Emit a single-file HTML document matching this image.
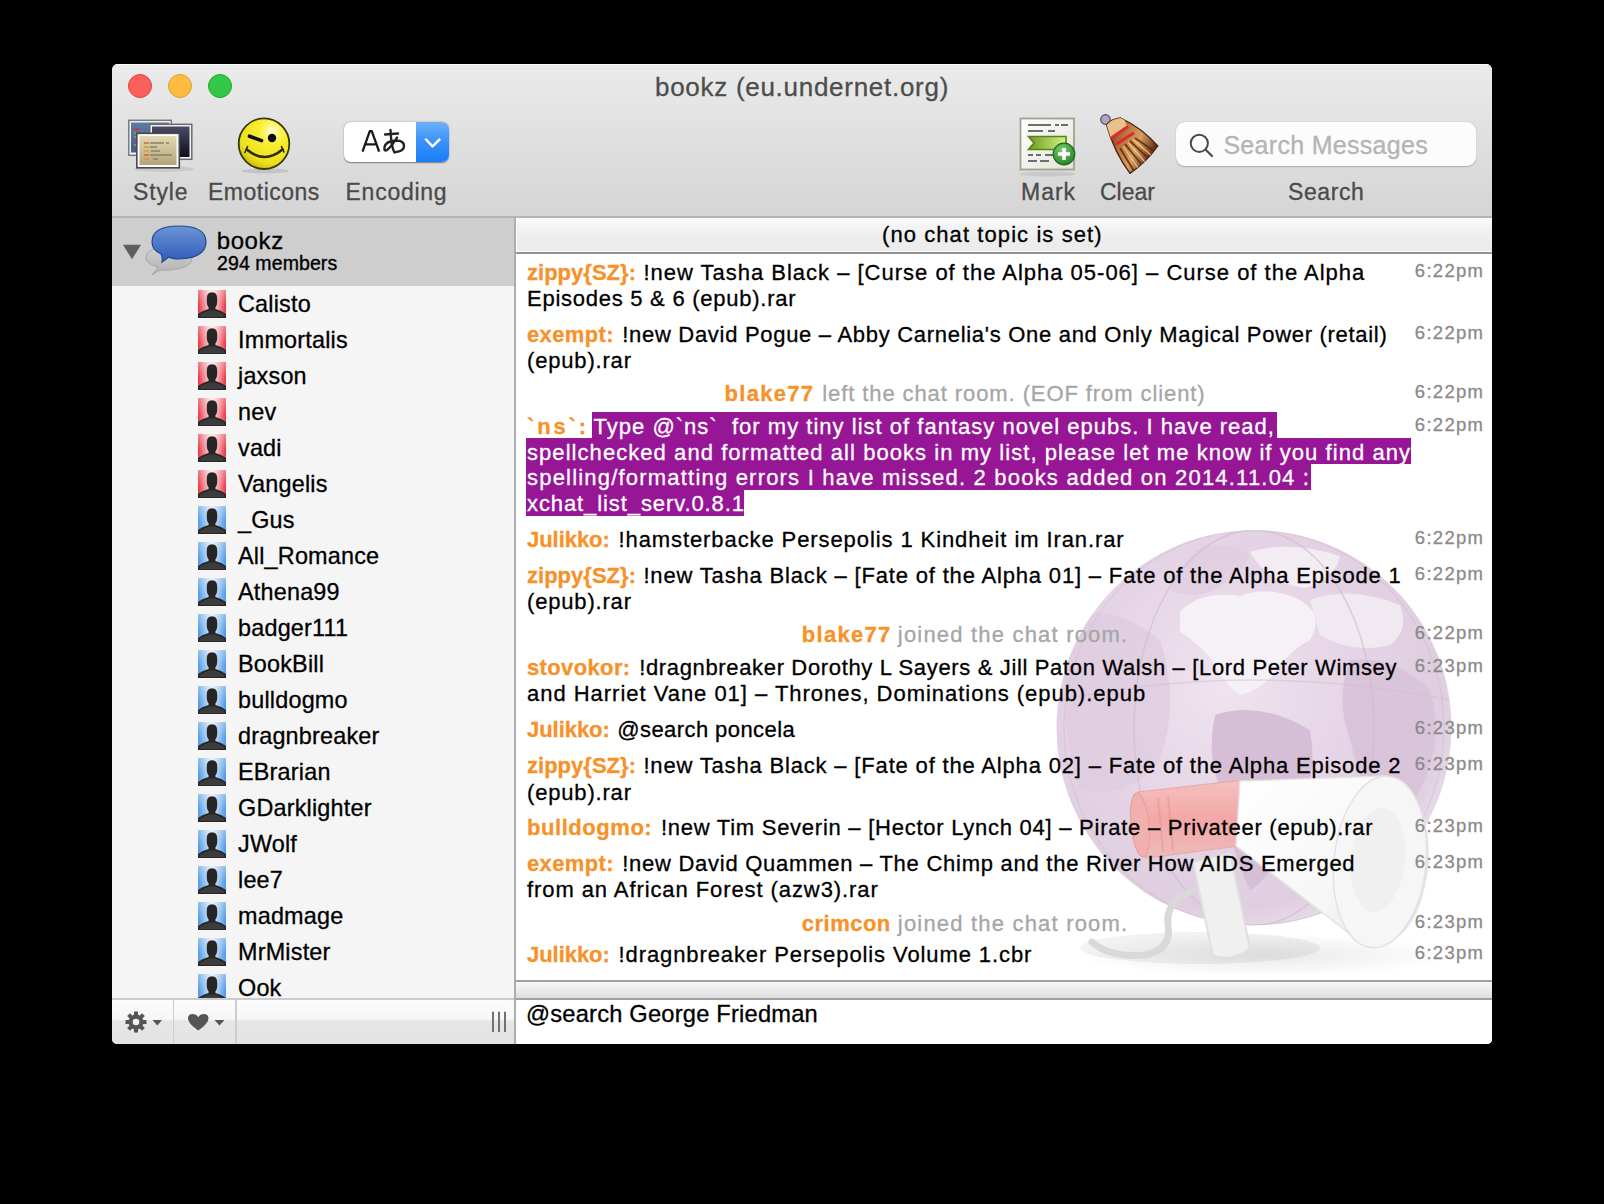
<!DOCTYPE html>
<html><head><meta charset="utf-8">
<style>
html,body{margin:0;padding:0;background:#000;width:1604px;height:1204px;overflow:hidden;}
*{box-sizing:border-box;}
body{font-family:"Liberation Sans",sans-serif;position:relative;}
.a{position:absolute;white-space:pre;line-height:normal;-webkit-text-stroke:0.3px currentColor;}
#win{position:absolute;left:112px;top:64px;width:1380px;height:980px;border-radius:6px 6px 5px 5px;overflow:hidden;background:#f5f5f5;}
#tb{position:absolute;left:0;top:0;width:1380px;height:154px;background:linear-gradient(#ebebeb,#e4e4e4 30%,#d5d5d5);border-bottom:2px solid #b3b3b3;box-shadow:inset 0 1px 0 #fafafa;}
.tl{position:absolute;top:10px;width:24px;height:24px;border-radius:50%;}
.title{left:0;width:1380px;text-align:center;top:8px;font-size:26px;letter-spacing:0.72px;color:#4d4d4d;}
.lbl{font-size:23px;color:#4a4a4a;top:115px;}
.nm{font-size:23.4px;color:#000;left:126px;letter-spacing:0.2px;}
.m{font-size:22px;color:#000;}
.n{font-size:22px;font-weight:bold;color:#f6922a;-webkit-text-stroke:0.3px currentColor;}
.ev{color:#a6a6a6;}
.hl{color:#fff;}
.ts{font-size:18.5px;letter-spacing:1.3px;color:#8a8a8a;right:7.7px;}
svg{position:absolute;overflow:visible;}
</style></head><body>
<svg width="0" height="0" style="position:absolute">
<defs>
 <linearGradient id="ured" x1="0" x2="1" y1="0" y2="0">
  <stop offset="0" stop-color="#e8323f"/><stop offset="0.3" stop-color="#f6a9b0"/><stop offset="0.5" stop-color="#fbe0e2"/><stop offset="0.7" stop-color="#f6a9b0"/><stop offset="1" stop-color="#e8323f"/>
 </linearGradient>
 <linearGradient id="ublue" x1="0" x2="1" y1="0" y2="0">
  <stop offset="0" stop-color="#4b97e6"/><stop offset="0.3" stop-color="#a9cdf3"/><stop offset="0.5" stop-color="#e2eefb"/><stop offset="0.7" stop-color="#a9cdf3"/><stop offset="1" stop-color="#4b97e6"/>
 </linearGradient>
 <linearGradient id="ushade" x1="0" x2="0" y1="0" y2="1">
  <stop offset="0" stop-color="#fff" stop-opacity="0.35"/><stop offset="0.6" stop-color="#fff" stop-opacity="0"/>
 </linearGradient>
 <g id="person">
  <path d="M8.8 8.2 Q8.8 2.2 14 2.2 Q19.2 2.2 19.2 8.2 L19.2 12 Q19.2 15.6 17.4 17.6 L17.4 19 Q23.5 20.5 28 24 L28 28 L0 28 L0 24 Q4.5 20.5 10.6 19 L10.6 17.6 Q8.8 15.6 8.8 12 Z" fill="#262626"/>
  <path d="M1.5 25 Q6 22 11.5 20.5 L16.5 20.5 Q22 22 26.5 25 L26.5 27 L1.5 27Z" fill="#3c3c3c"/>
 </g>
</defs>
</svg>
<div id="win">
  <div id="tb">
    <div class="tl" style="left:16px;background:#fc605c;border:1px solid #e0443e"></div>
    <div class="tl" style="left:56px;background:#fdbc40;border:1px solid #dea034"></div>
    <div class="tl" style="left:96px;background:#34c84a;border:1px solid #1aab29"></div>
    <div class="a title">bookz (eu.undernet.org)</div>
    <!-- style icon -->
<svg style="left:14px;top:54px" width="70" height="56" viewBox="0 0 70 56">
 <defs>
  <linearGradient id="stb" x1="0" y1="0" x2="0" y2="1"><stop offset="0" stop-color="#5d7ba3"/><stop offset="1" stop-color="#3f5f8e"/></linearGradient>
  <linearGradient id="stn" x1="0" y1="0" x2="0" y2="1"><stop offset="0" stop-color="#4a4a68"/><stop offset="1" stop-color="#0e0e1c"/></linearGradient>
  <linearGradient id="stf" x1="0" y1="0" x2="0" y2="1"><stop offset="0" stop-color="#e2d9b2"/><stop offset="1" stop-color="#b3a57a"/></linearGradient>
 </defs>
 <ellipse cx="38" cy="51" rx="30" ry="3" fill="#000" opacity="0.08"/>
 <rect x="2.8" y="2.3" width="42.5" height="35" fill="#f4f4f4" stroke="#7a7a7a" stroke-width="1.5"/>
 <rect x="5" y="4.5" width="38" height="30" fill="url(#stb)"/>
 <rect x="23.8" y="6.3" width="42" height="35" fill="#f4f4f4" stroke="#6a6a6a" stroke-width="1.5"/>
 <rect x="26" y="8.5" width="37.5" height="30.5" fill="url(#stn)"/>
 <rect x="10.8" y="15.3" width="42.5" height="34.5" fill="#fafafa" stroke="#4a4a4a" stroke-width="1.6"/>
 <rect x="13.5" y="18" width="37" height="29" fill="url(#stf)"/>
 <g stroke-width="1.7" transform="translate(1 2)">
  <line x1="17" y1="23" x2="22" y2="23" stroke="#d8604a"/><line x1="23" y1="23" x2="37" y2="23" stroke="#8a8068"/><line x1="39" y1="23" x2="42" y2="23" stroke="#8a8068"/>
  <line x1="17" y1="27" x2="22" y2="27" stroke="#e09040"/><line x1="23" y1="27" x2="30" y2="27" stroke="#8a8068"/>
  <line x1="17" y1="31" x2="22" y2="31" stroke="#e0a030"/><line x1="24" y1="31" x2="33" y2="31" stroke="#8a8068"/>
  <line x1="17" y1="35" x2="22" y2="35" stroke="#d8604a"/><line x1="23" y1="35" x2="45" y2="35" stroke="#8a8068"/>
  <line x1="17" y1="39" x2="22" y2="39" stroke="#e09040"/><line x1="26" y1="39" x2="31" y2="39" stroke="#8a8068"/>
 </g>
 <line x1="8" y1="11" x2="14" y2="11" stroke="#c03a3a" stroke-width="1.5"/><g stroke="#c8903a" stroke-width="1.3"><line x1="8" y1="15" x2="10" y2="15"/><line x1="8" y1="19" x2="10" y2="19"/><line x1="8" y1="27" x2="10" y2="27"/></g><line x1="8" y1="23" x2="10" y2="23" stroke="#c03a3a" stroke-width="1.3"/>
</svg>
<!-- smiley -->
<svg style="left:122px;top:50px" width="62" height="62" viewBox="0 0 62 62">
 <defs>
  <radialGradient id="smy" cx="0.66" cy="0.25" r="0.8"><stop offset="0" stop-color="#fffde0"/><stop offset="0.18" stop-color="#fbf66a"/><stop offset="0.35" stop-color="#f7ef30"/><stop offset="0.8" stop-color="#ece01c"/><stop offset="1" stop-color="#c9b80e"/></radialGradient>
 </defs>
 <ellipse cx="31" cy="57" rx="24" ry="2.5" fill="#000" opacity="0.1"/>
 <circle cx="30" cy="29.7" r="25.3" fill="url(#smy)" stroke="#3d3608" stroke-width="1.8"/>
 <line x1="15.5" y1="22.2" x2="27.5" y2="26.6" stroke="#111" stroke-width="3.6" stroke-linecap="round"/>
 <circle cx="38" cy="24" r="4.2" fill="#0a0a0a"/>
 <path d="M12.8 35.5 Q30.5 50.5 48.5 35.5" fill="none" stroke="#2d2a08" stroke-width="2.6" stroke-linecap="round"/>
 <path d="M11 38.5 L13.5 32.5 M50 38 L47.5 32.5" stroke="#2d2a08" stroke-width="1.6" stroke-linecap="round"/>
</svg>
<!-- encoding popup -->
<div style="position:absolute;left:232px;top:58px;width:105px;height:40px;border-radius:7px;background:#fff;box-shadow:0 0.5px 1.5px rgba(0,0,0,0.45);overflow:hidden">
 <div style="position:absolute;left:72px;top:0;width:33px;height:40px;background:linear-gradient(#6db1f9,#3c94fa 45%,#1a7bf8)"></div>
</div>
<svg style="left:244px;top:62px" width="95" height="34" viewBox="0 0 95 34">
 <path d="M70 13.5 L76.5 20.3 L83.5 13.5" fill="none" stroke="#fff" stroke-width="2.5" stroke-linecap="round" stroke-linejoin="round"/>
 <path d="M6.5 25.6 L13.8 5.2 L15.8 5.2 L23.1 25.6 M9.2 18.4 L20.4 18.4" fill="none" stroke="#1a1a1a" stroke-width="2.3" stroke-linejoin="round"/>
 <g fill="none" stroke="#222" stroke-width="2.4" stroke-linecap="round">
  <path d="M29 8.5 L42 7.5"/>
  <path d="M34.5 4 Q35 14 36 19 Q37 24 38.5 26.5"/>
  <path d="M41 11.5 Q36 20 31 24 Q28 26 28.5 21 Q30 15 40 14.5 Q48 14.5 48 20 Q48 25 40 26"/>
 </g>
</svg>
<!-- mark icon -->
<svg style="left:906px;top:52px" width="62" height="62" viewBox="0 0 62 62">
 <defs>
  <linearGradient id="mkd" x1="0" y1="0" x2="1" y2="1"><stop offset="0" stop-color="#ffffff"/><stop offset="1" stop-color="#e2e3d8"/></linearGradient>
  <linearGradient id="mkr" x1="0" y1="0" x2="1" y2="0"><stop offset="0" stop-color="#6d9a1e"/><stop offset="1" stop-color="#d4f48a"/></linearGradient>
  <radialGradient id="mkc" cx="0.4" cy="0.3" r="0.8"><stop offset="0" stop-color="#7ccf6a"/><stop offset="1" stop-color="#1f7a22"/></radialGradient>
 </defs>
 <ellipse cx="30" cy="58" rx="28" ry="2.5" fill="#000" opacity="0.08"/>
 <rect x="2.5" y="2.5" width="53.5" height="51" fill="url(#mkd)" stroke="#9fa28f" stroke-width="1.8"/>
 <g stroke="#6e6e6e" stroke-width="1.8">
  <line x1="10" y1="9" x2="33" y2="9"/><line x1="37" y1="9" x2="41" y2="9"/><line x1="43" y1="9" x2="50" y2="9"/>
  <line x1="10" y1="15" x2="25" y2="15"/><line x1="30" y1="15" x2="37" y2="15"/>
  <line x1="10" y1="39" x2="15" y2="39"/><line x1="18" y1="39" x2="23" y2="39"/><line x1="27" y1="39" x2="35" y2="39"/>
  <line x1="10" y1="45" x2="19" y2="45"/><line x1="22" y1="45" x2="31" y2="45"/>
 </g>
 <path d="M10.5 20.5 L48 20.5 L48 33.5 L10.5 33.5 L16 27 Z" fill="url(#mkr)" stroke="#5a8414" stroke-width="1.6"/>
 <circle cx="46" cy="38" r="10.8" fill="url(#mkc)" stroke="#1d6a1e" stroke-width="1.2"/>
 <path d="M46 32 L46 44 M40 38 L52 38" stroke="#fff" stroke-width="3.6"/>
</svg>
<!-- broom -->
<svg style="left:986px;top:50px" width="66" height="68" viewBox="0 0 66 68">
 <defs>
  <linearGradient id="brg" x1="8.6" y1="11" x2="59.8" y2="32" gradientUnits="userSpaceOnUse"><stop offset="0" stop-color="#5a2412"/><stop offset="0.3" stop-color="#b06a30"/><stop offset="0.65" stop-color="#d9a062"/><stop offset="1" stop-color="#5a2412"/></linearGradient>
  <clipPath id="brc"><path d="M8.6 11 Q14.1 4.5 22.6 4 Q44.2 14 59.8 32 Q48.4 48.2 32 59.4 Q15.8 37.4 8.6 11 Z"/></clipPath>
 </defs>
  <circle cx="7.5" cy="5.5" r="4.8" fill="#b2a4bc" stroke="#5a4868" stroke-width="1.2"/>
 <path d="M8.6 11 Q14.1 4.5 22.6 4 Q44.2 14 59.8 32 Q48.4 48.2 32 59.4 Q15.8 37.4 8.6 11 Z" fill="url(#brg)" stroke="#4a2010" stroke-width="1.3" stroke-linejoin="round"/>
 <g clip-path="url(#brc)">
  <path d="M5 10 L24 0 L29.6 12.9 L12 25 Z" fill="#e8c088"/>
  <line x1="11" y1="25.5" x2="30" y2="12.5" stroke="#de2a36" stroke-width="3"/>
  <line x1="17.5" y1="30.8" x2="36" y2="18.8" stroke="#de2a36" stroke-width="3"/>
  <g stroke="#5c2812" stroke-width="1.8" opacity="0.85">
   <line x1="22" y1="34" x2="36" y2="57"/><line x1="27" y1="30" x2="44" y2="51"/><line x1="32" y1="27" x2="50" y2="44"/><line x1="37" y1="24" x2="56" y2="37"/>
  </g>
  <g stroke="#f6d49a" stroke-width="1.2" opacity="0.8">
   <line x1="25" y1="32" x2="40" y2="54"/><line x1="30" y1="28.5" x2="47" y2="48"/><line x1="35" y1="25.5" x2="53" y2="41"/>
  </g>
 </g>
</svg>
<!-- search field -->
<div style="position:absolute;left:1064px;top:58px;width:300px;height:44px;border-radius:9px;background:#fcfcfc;box-shadow:0 0.5px 1.5px rgba(0,0,0,0.22)"></div>
<svg style="left:1074px;top:66px" width="40" height="30" viewBox="0 0 40 30">
 <circle cx="13.3" cy="13.3" r="8.6" fill="none" stroke="#4a4a4a" stroke-width="2"/>
 <line x1="19.5" y1="19.5" x2="26" y2="26" stroke="#4a4a4a" stroke-width="2.2" stroke-linecap="round"/>
</svg>
<div class="a" style="left:1111.4px;top:66.6px;font-size:25px;color:#b4b4b4;letter-spacing:0.3px">Search Messages</div>

    <div class="a lbl" style="left:21px;letter-spacing:0.85px">Style</div>
    <div class="a lbl" style="left:96px;letter-spacing:0.5px">Emoticons</div>
    <div class="a lbl" style="left:233.5px;letter-spacing:0.75px">Encoding</div>
    <div class="a lbl" style="left:909px;letter-spacing:1px">Mark</div>
    <div class="a lbl" style="left:988px">Clear</div>
    <div class="a lbl" style="left:1176px;letter-spacing:0.6px">Search</div>
  </div>
  <div style="position:absolute;left:0;top:154px;width:402px;height:781px;background:#f5f5f5"></div>
<div style="position:absolute;left:0;top:154px;width:402px;height:68px;background:#cecece"></div>
<svg style="left:10px;top:180px" width="20" height="16" viewBox="0 0 20 16"><path d="M1 0.8 L19 0.8 L10 15.2 Z" fill="#5e5e5e"/></svg>
<svg style="left:30px;top:156px" width="70" height="64" viewBox="0 0 70 64">
 <defs>
  <linearGradient id="bbl" x1="0" y1="0" x2="0" y2="1"><stop offset="0" stop-color="#6c93d6"/><stop offset="1" stop-color="#2c5cb8"/></linearGradient>
  <linearGradient id="bgr" x1="0" y1="0" x2="0" y2="1"><stop offset="0" stop-color="#d0d0d0"/><stop offset="1" stop-color="#b2b2b2"/></linearGradient>
 </defs>
 <path d="M10 55 Q14 50 16 47 Q4 44 4 38 Q4 27 27 27 Q50 27 50 38 Q50 49 27 50 Q20 50 16 51 Z" fill="url(#bgr)" stroke="#a8a8a8" stroke-width="1"/>
 <path d="M20 42 Q21 38 19 34 Q10 30 10 22 Q10 6 37 6 Q64 6 64 22 Q64 38 37 39 Q30 39 27 37 Z" fill="url(#bbl)" stroke="#24488e" stroke-width="1.2"/>
</svg>
<div class="a" style="left:104.7px;top:162.7px;font-size:24px;color:#000;letter-spacing:0.6px">bookz</div>
<div class="a" style="left:105px;top:188.4px;font-size:19.5px;color:#000;letter-spacing:0.1px;-webkit-text-stroke:0.35px #000">294 members</div>
<svg style="left:86px;top:226px" width="28" height="28" viewBox="0 0 28 28"><rect width="28" height="28" fill="url(#ured)"/><rect width="28" height="28" fill="url(#ushade)"/><use href="#person"/></svg>
<div class="a nm" style="top:227px">Calisto</div>
<svg style="left:86px;top:262px" width="28" height="28" viewBox="0 0 28 28"><rect width="28" height="28" fill="url(#ured)"/><rect width="28" height="28" fill="url(#ushade)"/><use href="#person"/></svg>
<div class="a nm" style="top:263px">Immortalis</div>
<svg style="left:86px;top:298px" width="28" height="28" viewBox="0 0 28 28"><rect width="28" height="28" fill="url(#ured)"/><rect width="28" height="28" fill="url(#ushade)"/><use href="#person"/></svg>
<div class="a nm" style="top:299px">jaxson</div>
<svg style="left:86px;top:334px" width="28" height="28" viewBox="0 0 28 28"><rect width="28" height="28" fill="url(#ured)"/><rect width="28" height="28" fill="url(#ushade)"/><use href="#person"/></svg>
<div class="a nm" style="top:335px">nev</div>
<svg style="left:86px;top:370px" width="28" height="28" viewBox="0 0 28 28"><rect width="28" height="28" fill="url(#ured)"/><rect width="28" height="28" fill="url(#ushade)"/><use href="#person"/></svg>
<div class="a nm" style="top:371px">vadi</div>
<svg style="left:86px;top:406px" width="28" height="28" viewBox="0 0 28 28"><rect width="28" height="28" fill="url(#ured)"/><rect width="28" height="28" fill="url(#ushade)"/><use href="#person"/></svg>
<div class="a nm" style="top:407px">Vangelis</div>
<svg style="left:86px;top:442px" width="28" height="28" viewBox="0 0 28 28"><rect width="28" height="28" fill="url(#ublue)"/><rect width="28" height="28" fill="url(#ushade)"/><use href="#person"/></svg>
<div class="a nm" style="top:443px">_Gus</div>
<svg style="left:86px;top:478px" width="28" height="28" viewBox="0 0 28 28"><rect width="28" height="28" fill="url(#ublue)"/><rect width="28" height="28" fill="url(#ushade)"/><use href="#person"/></svg>
<div class="a nm" style="top:479px">All_Romance</div>
<svg style="left:86px;top:514px" width="28" height="28" viewBox="0 0 28 28"><rect width="28" height="28" fill="url(#ublue)"/><rect width="28" height="28" fill="url(#ushade)"/><use href="#person"/></svg>
<div class="a nm" style="top:515px">Athena99</div>
<svg style="left:86px;top:550px" width="28" height="28" viewBox="0 0 28 28"><rect width="28" height="28" fill="url(#ublue)"/><rect width="28" height="28" fill="url(#ushade)"/><use href="#person"/></svg>
<div class="a nm" style="top:551px">badger111</div>
<svg style="left:86px;top:586px" width="28" height="28" viewBox="0 0 28 28"><rect width="28" height="28" fill="url(#ublue)"/><rect width="28" height="28" fill="url(#ushade)"/><use href="#person"/></svg>
<div class="a nm" style="top:587px">BookBill</div>
<svg style="left:86px;top:622px" width="28" height="28" viewBox="0 0 28 28"><rect width="28" height="28" fill="url(#ublue)"/><rect width="28" height="28" fill="url(#ushade)"/><use href="#person"/></svg>
<div class="a nm" style="top:623px">bulldogmo</div>
<svg style="left:86px;top:658px" width="28" height="28" viewBox="0 0 28 28"><rect width="28" height="28" fill="url(#ublue)"/><rect width="28" height="28" fill="url(#ushade)"/><use href="#person"/></svg>
<div class="a nm" style="top:659px">dragnbreaker</div>
<svg style="left:86px;top:694px" width="28" height="28" viewBox="0 0 28 28"><rect width="28" height="28" fill="url(#ublue)"/><rect width="28" height="28" fill="url(#ushade)"/><use href="#person"/></svg>
<div class="a nm" style="top:695px">EBrarian</div>
<svg style="left:86px;top:730px" width="28" height="28" viewBox="0 0 28 28"><rect width="28" height="28" fill="url(#ublue)"/><rect width="28" height="28" fill="url(#ushade)"/><use href="#person"/></svg>
<div class="a nm" style="top:731px">GDarklighter</div>
<svg style="left:86px;top:766px" width="28" height="28" viewBox="0 0 28 28"><rect width="28" height="28" fill="url(#ublue)"/><rect width="28" height="28" fill="url(#ushade)"/><use href="#person"/></svg>
<div class="a nm" style="top:767px">JWolf</div>
<svg style="left:86px;top:802px" width="28" height="28" viewBox="0 0 28 28"><rect width="28" height="28" fill="url(#ublue)"/><rect width="28" height="28" fill="url(#ushade)"/><use href="#person"/></svg>
<div class="a nm" style="top:803px">lee7</div>
<svg style="left:86px;top:838px" width="28" height="28" viewBox="0 0 28 28"><rect width="28" height="28" fill="url(#ublue)"/><rect width="28" height="28" fill="url(#ushade)"/><use href="#person"/></svg>
<div class="a nm" style="top:839px">madmage</div>
<svg style="left:86px;top:874px" width="28" height="28" viewBox="0 0 28 28"><rect width="28" height="28" fill="url(#ublue)"/><rect width="28" height="28" fill="url(#ushade)"/><use href="#person"/></svg>
<div class="a nm" style="top:875px">MrMister</div>
<svg style="left:86px;top:910px" width="28" height="28" viewBox="0 0 28 28"><rect width="28" height="28" fill="url(#ublue)"/><rect width="28" height="28" fill="url(#ushade)"/><use href="#person"/></svg>
<div class="a nm" style="top:911px">Ook</div>
<!-- bottom bar -->
<div style="position:absolute;left:0;top:934px;width:402px;height:46px;border-top:2px solid #cbcbcb;background:linear-gradient(#fcfcfc,#f6f6f6 44%,#e6e6e6 48%,#e3e3e3)"></div>
<div style="position:absolute;left:60.5px;top:936px;width:1.5px;height:44px;background:#cdcdcd"></div>
<div style="position:absolute;left:123px;top:936px;width:1.5px;height:44px;background:#cdcdcd"></div>
<svg style="left:12px;top:946px" width="120" height="24" viewBox="0 0 120 24">
 <g transform="translate(12 12)" fill="#555">
  <circle r="7.5"/>
  <g><rect x="-2" y="-10.5" width="4" height="5"/><rect x="-2" y="5.5" width="4" height="5"/><rect x="-10.5" y="-2" width="5" height="4"/><rect x="5.5" y="-2" width="5" height="4"/>
  <g transform="rotate(45)"><rect x="-2" y="-10.5" width="4" height="5"/><rect x="-2" y="5.5" width="4" height="5"/><rect x="-10.5" y="-2" width="5" height="4"/><rect x="5.5" y="-2" width="5" height="4"/></g></g>
  <circle r="3.3" fill="#f2f2f2"/>
 </g>
 <path d="M28.5 10 L38 10 L33.25 15.5Z" fill="#555"/>
 <path d="M74.25 20.5 Q64 13.5 64 8.5 Q64 4 68.8 4 Q72.3 4 74.25 7.2 Q76.2 4 79.7 4 Q84.5 4 84.5 8.5 Q84.5 13.5 74.25 20.5Z" fill="#555"/>
 <path d="M90.5 10 L100.5 10 L95.5 15.5Z" fill="#555"/>
</svg>
<svg style="left:378px;top:946px" width="20" height="24" viewBox="0 0 20 24"><g stroke="#727272" stroke-width="2"><line x1="3" y1="1.7" x2="3" y2="22"/><line x1="9" y1="1.7" x2="9" y2="22"/><line x1="15" y1="1.7" x2="15" y2="22"/></g></svg>
<div style="position:absolute;left:402px;top:154px;width:2px;height:826px;background:#adadad"></div>

  <div style="position:absolute;left:404px;top:154px;width:976px;height:826px;background:#fff"></div>
<div style="position:absolute;left:404px;top:154px;width:976px;height:36px;background:linear-gradient(#fafafa,#ededed 60%,#ececec);border-bottom:2px solid #939393;box-shadow:inset 1px -1px 0 #fff"></div>
<div class="a m" style="left:770px;top:158.3px;letter-spacing:1.08px">(no chat topic is set)</div>
<svg style="left:404px;top:190px" width="976" height="726" viewBox="516 254 976 726">
 <defs>
  <radialGradient id="gl" cx="0.42" cy="0.4" r="0.62"><stop offset="0" stop-color="#efe4ef"/><stop offset="0.55" stop-color="#e5d4e5"/><stop offset="0.9" stop-color="#dfcedf"/><stop offset="1" stop-color="#e6dae6"/></radialGradient>
  <radialGradient id="gsh" cx="0.5" cy="0.5" r="0.5"><stop offset="0" stop-color="#000" stop-opacity="0.09"/><stop offset="1" stop-color="#000" stop-opacity="0"/></radialGradient>
  <linearGradient id="mred" x1="0" y1="0" x2="0" y2="1"><stop offset="0" stop-color="#f6c0be"/><stop offset="0.5" stop-color="#f2a8a6"/><stop offset="1" stop-color="#eebbba"/></linearGradient>
  <linearGradient id="mbell" x1="0" y1="0" x2="1" y2="1"><stop offset="0" stop-color="#ffffff"/><stop offset="0.6" stop-color="#f6f6f6"/><stop offset="1" stop-color="#e2e2e2"/></linearGradient>
  <clipPath id="gclip"><circle cx="1254" cy="727.7" r="197.5"/></clipPath>
 </defs>
 <ellipse cx="1265" cy="955" rx="190" ry="22" fill="url(#gsh)"/>
 <circle cx="1254" cy="727.7" r="197.5" fill="url(#gl)"/>
 <g clip-path="url(#gclip)">
  <path d="M1180 612 Q1200 590 1240 596 Q1270 585 1300 600 Q1325 615 1310 640 Q1290 650 1275 672 Q1262 690 1240 695 Q1220 680 1212 660 Q1195 640 1180 632Z" fill="#f6f1f6"/>
  <path d="M1250 552 Q1290 540 1340 556 Q1335 580 1305 588 Q1270 585 1250 552Z" fill="#f3ecf3"/>
  <path d="M1310 600 Q1350 585 1400 605 Q1410 630 1390 645 Q1355 655 1320 635Z" fill="#f1e9f1"/>
  <path d="M1350 660 Q1395 655 1430 690 Q1445 740 1420 790 Q1400 830 1375 820 Q1360 780 1350 740 Q1335 700 1350 660Z" fill="#dac4da"/>
  <path d="M1215 715 Q1260 700 1310 730 Q1320 780 1290 830 Q1270 880 1250 890 Q1230 850 1225 800 Q1205 760 1215 715Z" fill="#d6bed6"/>
  <path d="M1070 620 Q1110 600 1160 640 Q1180 700 1160 760 Q1130 800 1080 790 Q1055 720 1070 620Z" fill="#dfcddf" opacity="0.8"/>
  <path d="M1200 548 Q1230 540 1250 555 Q1240 575 1215 590 Q1190 600 1170 590 Q1180 562 1200 548Z" fill="#e0cde0" opacity="0.7"/>
  <ellipse cx="1254" cy="727.7" rx="120" ry="197.5" fill="none" stroke="#d2bcd2" stroke-width="1.5" opacity="0.7"/>
  <ellipse cx="1254" cy="727.7" rx="190" ry="197.5" fill="none" stroke="#d2bcd2" stroke-width="1.2" opacity="0.5"/>
  <path d="M1060 700 Q1254 660 1450 700" fill="none" stroke="#d2bcd2" stroke-width="1.5" opacity="0.5"/>
 </g>
 <!-- megaphone -->
 <ellipse cx="1200" cy="948" rx="120" ry="16" fill="#000" opacity="0.05"/>
 <path d="M1195 890 Q1165 900 1168 925 Q1172 950 1145 955 Q1110 958 1092 942" fill="none" stroke="#d9d9d9" stroke-width="7" stroke-linecap="round"/>
 <path d="M1193 862 L1230 853 L1250 948 Q1235 962 1213 956 Z" fill="#f0f0f0" stroke="#e0e0e0" stroke-width="2"/>
 <path d="M1138 792 L1244 780 L1246 845 L1146 858 Q1126 825 1138 792Z" fill="url(#mred)" stroke="#eaa8a8" stroke-width="1.2"/>
 <ellipse cx="1140" cy="825" rx="9" ry="32" fill="#efb0ae" stroke="#e6a2a0" stroke-width="1.2" transform="rotate(-6 1140 825)"/>
 <path d="M1158 798 L1163 852 M1168 796 L1173 850" stroke="#e89290" stroke-width="2" opacity="0.5"/>
 <path d="M1240 781 L1384 776 Q1430 790 1428 862 Q1420 945 1367 947 L1236 846 Z" fill="url(#mbell)" stroke="#e4e4e4" stroke-width="1.5"/>
 <ellipse cx="1380" cy="862" rx="46" ry="86" fill="#f6f6f6" stroke="#e2e2e2" stroke-width="1.5" transform="rotate(6 1380 862)"/>
 <ellipse cx="1378" cy="860" rx="27" ry="52" fill="#efefef" opacity="0.8" transform="rotate(6 1378 860)"/>
</svg>

<div style="position:absolute;left:479.8px;top:348px;width:684.9px;height:26px;background:#961696"></div>
<div style="position:absolute;left:414.2px;top:374px;width:885.3px;height:26px;background:#961696"></div>
<div style="position:absolute;left:414.2px;top:400px;width:784.8px;height:26px;background:#961696"></div>
<div style="position:absolute;left:414.2px;top:426px;width:218.2px;height:26px;background:#961696"></div>
<div class="a n" style="left:415.0px;top:196.0px;letter-spacing:0.023px">zippy{SZ}:</div>
<div class="a m" style="left:531.4px;top:196.0px;letter-spacing:0.993px">!new Tasha Black – [Curse of the Alpha 05-06] – Curse of the Alpha</div>
<div class="a m" style="left:415.0px;top:222.0px;letter-spacing:0.742px">Episodes 5 &amp; 6 (epub).rar</div>
<div class="a n" style="left:415.0px;top:258.0px;letter-spacing:0.357px">exempt:</div>
<div class="a m" style="left:510.2px;top:258.0px;letter-spacing:0.706px">!new David Pogue – Abby Carnelia&#x27;s One and Only Magical Power (retail)</div>
<div class="a m" style="left:415.0px;top:284.0px;letter-spacing:0.823px">(epub).rar</div>
<div class="a n" style="left:612.5px;top:317.0px;letter-spacing:1.294px">blake77</div>
<div class="a m ev" style="left:710.2px;top:317.0px;letter-spacing:0.912px">left the chat room. (EOF from client)</div>
<div class="a n" style="left:415.0px;top:349.6px;letter-spacing:2.836px">`ns`:</div>
<div class="a m hl" style="left:481.5px;top:349.6px;letter-spacing:1.017px">Type @`ns`  for my tiny list of fantasy novel epubs. I have read,</div>
<div class="a m hl" style="left:415.0px;top:375.5px;letter-spacing:1.060px">spellchecked and formatted all books in my list, please let me know if you find any</div>
<div class="a m hl" style="left:415.0px;top:401.2px;letter-spacing:1.201px">spelling/formatting errors I have missed. 2 books added on 2014.11.04 :</div>
<div class="a m hl" style="left:415.0px;top:427.0px;letter-spacing:0.904px">xchat_list_serv.0.8.1</div>
<div class="a n" style="left:415.0px;top:463.0px;letter-spacing:-0.049px">Julikko:</div>
<div class="a m" style="left:506.5px;top:463.0px;letter-spacing:0.908px">!hamsterbacke Persepolis 1 Kindheit im Iran.rar</div>
<div class="a n" style="left:415.0px;top:499.2px;letter-spacing:0.023px">zippy{SZ}:</div>
<div class="a m" style="left:531.4px;top:499.2px;letter-spacing:0.832px">!new Tasha Black – [Fate of the Alpha 01] – Fate of the Alpha Episode 1</div>
<div class="a m" style="left:415.0px;top:525.4px;letter-spacing:0.823px">(epub).rar</div>
<div class="a n" style="left:689.8px;top:558.4px;letter-spacing:1.294px">blake77</div>
<div class="a m ev" style="left:785.8px;top:558.4px;letter-spacing:1.197px">joined the chat room.</div>
<div class="a n" style="left:415.0px;top:591.0px;letter-spacing:0.369px">stovokor:</div>
<div class="a m" style="left:527.2px;top:591.0px;letter-spacing:0.650px">!dragnbreaker Dorothy L Sayers &amp; Jill Paton Walsh – [Lord Peter Wimsey</div>
<div class="a m" style="left:415.0px;top:617.0px;letter-spacing:0.976px">and Harriet Vane 01] – Thrones, Dominations (epub).epub</div>
<div class="a n" style="left:415.0px;top:653.2px;letter-spacing:-0.049px">Julikko:</div>
<div class="a m" style="left:505.2px;top:653.2px;letter-spacing:0.432px">@search poncela</div>
<div class="a n" style="left:415.0px;top:689.4px;letter-spacing:0.023px">zippy{SZ}:</div>
<div class="a m" style="left:531.4px;top:689.4px;letter-spacing:0.827px">!new Tasha Black – [Fate of the Alpha 02] – Fate of the Alpha Episode 2</div>
<div class="a m" style="left:415.0px;top:715.5px;letter-spacing:0.823px">(epub).rar</div>
<div class="a n" style="left:415.0px;top:751.0px;letter-spacing:0.550px">bulldogmo:</div>
<div class="a m" style="left:548.9px;top:751.0px;letter-spacing:0.743px">!new Tim Severin – [Hector Lynch 04] – Pirate – Privateer (epub).rar</div>
<div class="a n" style="left:415.0px;top:787.1px;letter-spacing:0.357px">exempt:</div>
<div class="a m" style="left:510.2px;top:787.1px;letter-spacing:0.740px">!new David Quammen – The Chimp and the River How AIDS Emerged</div>
<div class="a m" style="left:415.0px;top:813.3px;letter-spacing:0.914px">from an African Forest (azw3).rar</div>
<div class="a n" style="left:689.8px;top:847.0px;letter-spacing:0.484px">crimcon</div>
<div class="a m ev" style="left:785.8px;top:847.0px;letter-spacing:1.197px">joined the chat room.</div>
<div class="a n" style="left:415.0px;top:878.1px;letter-spacing:-0.049px">Julikko:</div>
<div class="a m" style="left:506.5px;top:878.1px;letter-spacing:0.905px">!dragnbreaker Persepolis Volume 1.cbr</div>
<div class="a ts" style="top:196.0px">6:22pm</div>
<div class="a ts" style="top:258.0px">6:22pm</div>
<div class="a ts" style="top:317.0px">6:22pm</div>
<div class="a ts" style="top:349.6px">6:22pm</div>
<div class="a ts" style="top:463.0px">6:22pm</div>
<div class="a ts" style="top:499.2px">6:22pm</div>
<div class="a ts" style="top:558.4px">6:22pm</div>
<div class="a ts" style="top:591.0px">6:23pm</div>
<div class="a ts" style="top:653.2px">6:23pm</div>
<div class="a ts" style="top:689.4px">6:23pm</div>
<div class="a ts" style="top:751.0px">6:23pm</div>
<div class="a ts" style="top:787.1px">6:23pm</div>
<div class="a ts" style="top:847.0px">6:23pm</div>
<div class="a ts" style="top:878.1px">6:23pm</div>
<div style="position:absolute;left:404px;top:916px;width:976px;height:20px;border-top:2px solid #a0a0a0;border-bottom:2px solid #a0a0a0;background:linear-gradient(#f9f9f9,#dddddd)"></div>
<div style="position:absolute;left:404px;top:936px;width:976px;height:44px;background:#fff"></div>
<div class="a" style="left:414px;top:936.6px;font-size:23.7px;color:#000;letter-spacing:0.2px">@search George Friedman</div>

</div>
</body></html>
